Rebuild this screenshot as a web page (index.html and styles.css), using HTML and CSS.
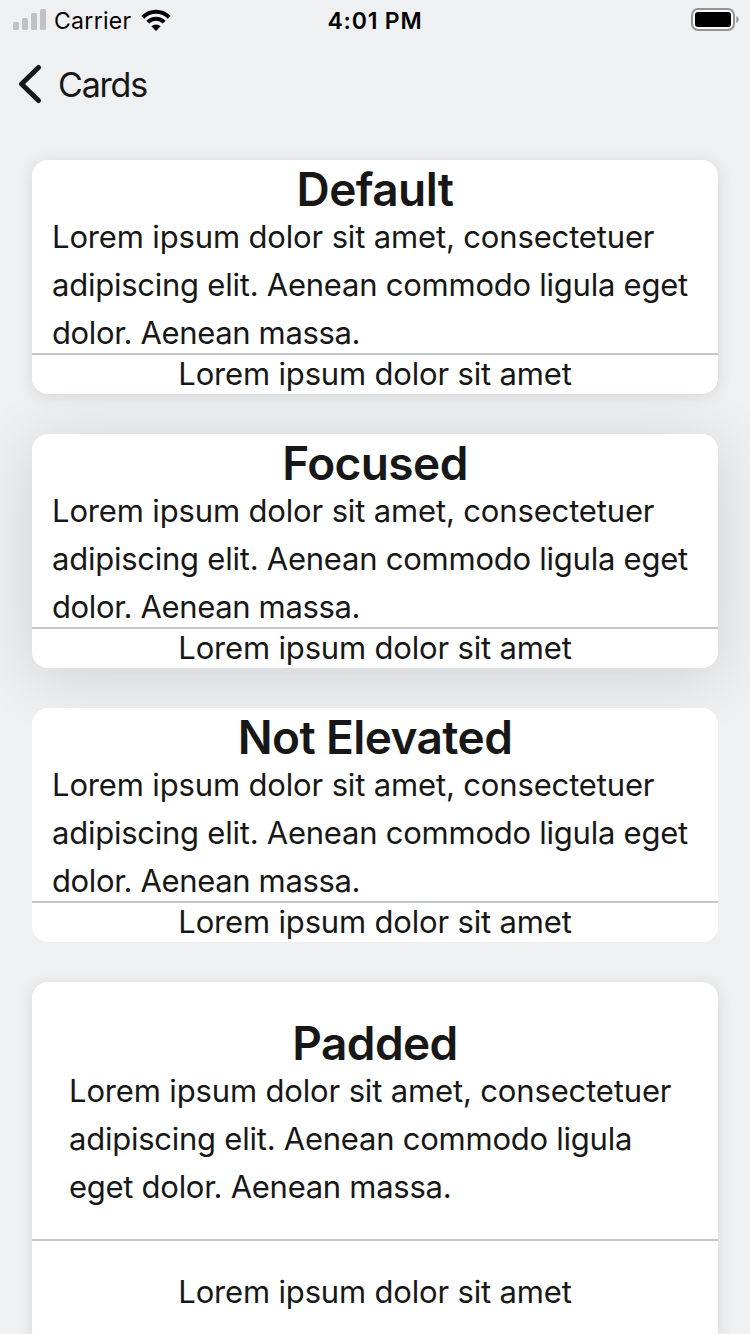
FILE: index.html
```html
<!DOCTYPE html>
<html lang="en">
<head>
<meta charset="utf-8">
<title>Cards</title>
<link rel="stylesheet" href="styles.css">
</head>
<body>
<header class="status">
  <div class="status-left">
    <svg class="signal" width="34" height="22" viewBox="0 0 34 22" fill="#c0c1c3"><rect x="0" y="13" width="6" height="8" rx="1.6"/><rect x="9" y="9" width="6" height="12" rx="1.6"/><rect x="18" y="4" width="6" height="17" rx="1.6"/><rect x="27" y="0" width="6" height="21" rx="1.6"/></svg>
    <span class="carrier">Carrier</span>
    <svg class="wifi" width="30" height="22" viewBox="0 0 30 22"><g fill="none" stroke="#000" stroke-width="4"><path d="M1.8 8.3A18.6 18.6 0 0 1 28.2 8.3"/><path d="M6.8 13.2A11.6 11.6 0 0 1 23.2 13.2"/></g><path d="M15 22L10.4 17.3A6.6 6.6 0 0 1 19.6 17.3Z"/></svg>
  </div>
  <div class="time">4:01 PM</div>
  <svg class="battery" width="48" height="24" viewBox="0 0 48 24"><rect x="1" y="1" width="42" height="21" rx="6" fill="#f8f9f9" stroke="#939495" stroke-width="2"/><rect x="4" y="4" width="36" height="15" rx="3" fill="#000"/><path d="M45.4 8Q47.8 9.2 47.8 11.5T45.4 15Z" fill="#939495"/></svg>
</header>
<nav class="nav">
  <svg width="24" height="40" viewBox="0 0 24 40" fill="none" stroke="#171717" stroke-width="5" stroke-linecap="round" stroke-linejoin="round"><path d="M20.5 3.5L3.5 20L20.5 36.5"/></svg>
  <span class="nav-title">Cards</span>
</nav>
<main class="list">
  <section class="card elevated">
    <h2 class="title">Default</h2>
    <p class="body"><span class="l1">Lorem ipsum dolor sit amet, consectetuer</span><br><span class="l2">adipiscing elit. Aenean commodo ligula eget</span><br><span class="l3">dolor. Aenean massa.</span></p>
    <footer class="foot">Lorem ipsum dolor sit amet</footer>
  </section>
  <section class="card focused">
    <h2 class="title">Focused</h2>
    <p class="body"><span class="l1">Lorem ipsum dolor sit amet, consectetuer</span><br><span class="l2">adipiscing elit. Aenean commodo ligula eget</span><br><span class="l3">dolor. Aenean massa.</span></p>
    <footer class="foot">Lorem ipsum dolor sit amet</footer>
  </section>
  <section class="card">
    <h2 class="title">Not Elevated</h2>
    <p class="body"><span class="l1">Lorem ipsum dolor sit amet, consectetuer</span><br><span class="l2">adipiscing elit. Aenean commodo ligula eget</span><br><span class="l3">dolor. Aenean massa.</span></p>
    <footer class="foot">Lorem ipsum dolor sit amet</footer>
  </section>
  <section class="card elevated padded">
    <h2 class="title">Padded</h2>
    <p class="body"><span class="l1">Lorem ipsum dolor sit amet, consectetuer</span><br><span class="l2">adipiscing elit. Aenean commodo ligula</span><br><span class="l3">eget dolor. Aenean massa.</span></p>
    <footer class="foot">Lorem ipsum dolor sit amet</footer>
  </section>
</main>
</body>
</html>
```
FILE: styles.css
```css
* { box-sizing: border-box; margin: 0; padding: 0; }
html, body { height: 1334px; overflow: hidden; }
body {
  background: #eff0f2;
  color: #171717;
  font-family: Inter, "Liberation Sans", sans-serif;
  display: flex;
  flex-direction: column;
}
svg { display: block; flex: none; }
.status {
  height: 40px;
  flex: none;
  display: grid;
  grid-template-columns: 1fr auto 1fr;
  align-items: center;
  padding: 0 11px 0 13px;
  color: #000;
}
.status-left { display: flex; align-items: center; }
.signal { margin-right: 7px; }
.carrier { font-size: 23px; letter-spacing: 0.3px; padding-top: 2px; }
.wifi { margin-left: 9px; }
.time { font-size: 23px; font-weight: 600; letter-spacing: 0.8px; padding-top: 2px; margin-right: 2px; }
.battery { justify-self: end; }
.nav {
  height: 88px;
  flex: none;
  display: flex;
  align-items: center;
  padding-left: 18px;
  gap: 16px;
}
.nav-title { font-size: 34px; letter-spacing: -1.2px; }
.list {
  flex: none;
  display: flex;
  flex-direction: column;
  gap: 40px;
  padding: 32px;
}
.card { background: #fff; border-radius: 16px; height: 234px; }
.elevated { box-shadow: 0 2px 16px rgba(0, 0, 0, 0.11); }
.focused { box-shadow: 0 8px 64px rgba(0, 0, 0, 0.13); }
.title {
  height: 53px;
  font-size: 46px;
  line-height: 58px;
  font-weight: 600;
  text-align: center;
  letter-spacing: -0.6px;
}
.body {
  height: 140px;
  padding-left: 20px;
  font-size: 31px;
  line-height: 48px;
  white-space: nowrap;
}
.l1 { letter-spacing: -0.15px; }
.l2 { letter-spacing: -0.24px; }
.l3 { letter-spacing: -0.36px; }
.foot {
  height: 41px;
  border-top: 2px solid #c2c6ca;
  font-size: 31px;
  line-height: 37px;
  letter-spacing: -0.17px;
  text-align: center;
}
.padded { height: 364px; padding-top: 32px; }
.padded .body { height: 172px; padding-left: 37px; }
.padded .l3 { letter-spacing: -0.28px; }
.padded .foot { height: 107px; line-height: 102px; }
```
